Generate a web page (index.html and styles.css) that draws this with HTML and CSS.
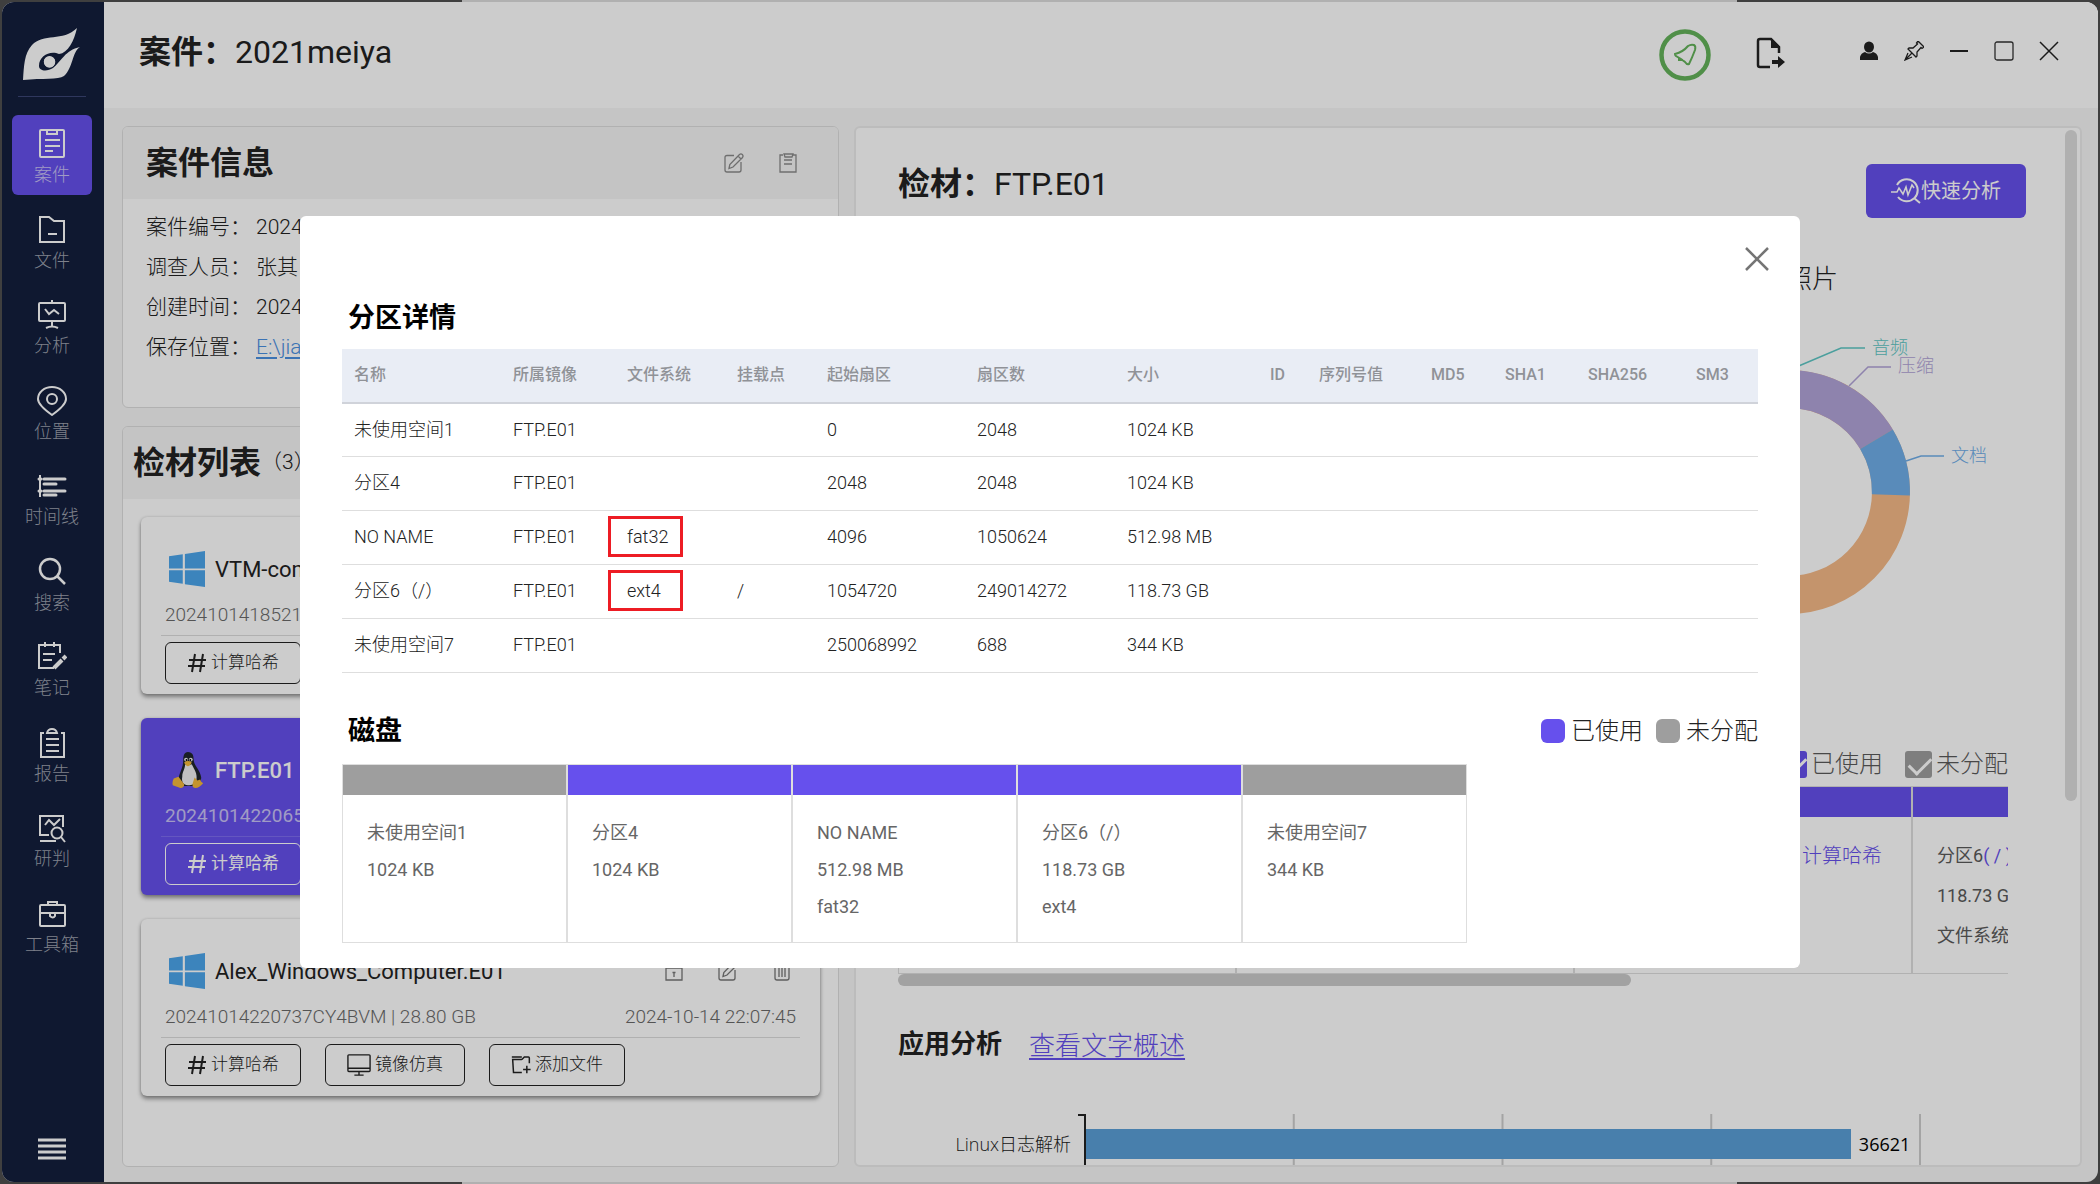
FILE: index.html
```html
<!DOCTYPE html>
<html lang="zh-CN">
<head>
<meta charset="utf-8">
<title>案件：2021meiya</title>
<link rel="stylesheet" href="styles.css">
</head>
<body>
<svg class="sprite" aria-hidden="true">
  <symbol id="i-windows" viewBox="0 0 34 34"><path fill="#4ba5ec" d="M0 5l13-2v13.500H0zM15 2.800L34 0v16.500H15zM0 18.200h13V31L0 29zM15 18.200H34V34l-19-2.700z"/></symbol>
  <symbol id="i-hash" viewBox="0 0 20 20"><path fill="none" stroke="currentColor" stroke-width="2" d="M8 1L5 19M16 1l-3 18M2 7h17M1 13h17"/></symbol>
  <symbol id="i-edit" viewBox="0 0 20 20"><g fill="none" stroke="currentColor" stroke-width="1.300"><path d="M10 2.500H3Q1 2.500 1 4.500V17q0 2 2 2h12q2 0 2-2V9"/><path d="M5 15.500l.800-4L15.500 1.500Q17 .300 18.300 1.500T18.500 4.500L9 14zM14 3l3 3"/></g></symbol>
  <symbol id="i-monitor" viewBox="0 0 26 24"><path fill="none" stroke="currentColor" stroke-width="1.500" d="M2 1h22q1 0 1 1v16q0 1-1 1H2q-1 0-1-1V2q0-1 1-1zM1 15.500h24M13 19v4M8 23h10"/></symbol>
  <symbol id="i-addfile" viewBox="0 0 24 22"><path fill="none" stroke="currentColor" stroke-width="1.800" d="M1 1.500h12M13 4.500H2L3 20h10M13 4.500l3-3h5q1 0 1 1V9M19 12v9M14.500 16.500h9"/></symbol>
  <symbol id="i-lock" viewBox="0 0 20 20"><path fill="none" stroke="currentColor" stroke-width="1.300" d="M2 7h16v12H2zM6 7V4q0-3 4-3t4 3M10 11v5M8.500 11.500h3"/></symbol>
  <symbol id="i-trash" viewBox="0 0 20 20"><path fill="none" stroke="currentColor" stroke-width="1.300" d="M1 4h18M7 4V1h6v3M3 4v13q0 2 2 2h10q2 0 2-2V4M7 7v9M10 7v9M13 7v9"/></symbol>
</svg>

<div class="window">
  <aside class="sidebar">
    <svg class="logo" viewBox="0 0 58 52"><path fill="#fff" fill-rule="evenodd" d="M54 0C51 13 45 25 36 26C28 22 16 27 16 38C16 43 24 44 30 40C38 34 42 22 57 19C49 24 50 40 41 48C35 52 20 50 0 52C1 38 1 26 9 17C20 5 40 14 54 0zM26.500 28A5.500 5.500 0 1 0 26.600 39.500A5.500 5.500 0 0 0 26.500 28z"/><circle cx="26.500" cy="34" r="5.500" fill="#fff"/></svg>
    <hr class="rule">
    <nav class="nav" aria-label="主菜单">
      <a class="item active" href="#"><svg viewBox="0 0 30 30"><g fill="none" stroke="currentColor" stroke-width="2"><rect x="3" y="1" width="24" height="27" rx="1"/><path d="M10 1v4h10V1M8 11h15M8 17h15M8 22h8"/></g></svg>案件</a>
      <a class="item" href="#"><svg viewBox="0 0 30 30"><path fill="none" stroke="currentColor" stroke-width="2" d="M3 2h9l5 4h10v21H3zM11 19h9"/></svg>文件</a>
      <a class="item" href="#"><svg viewBox="0 0 30 30"><path fill="none" stroke="currentColor" stroke-width="2" d="M15 0v3M3 3h24q1 0 1 1v16q0 1-1 1H3q-1 0-1-1V4q0-1 1-1zM8 9l4 5 5-4 5 4M15 21v6M9 28q6-3 12 0"/></svg>分析</a>
      <a class="item" href="#"><svg viewBox="0 0 30 30"><path fill="none" stroke="currentColor" stroke-width="2" d="M15 29Q1 19 1 13a14 12 0 0 1 28 0q0 6-14 16z"/><circle cx="15" cy="13" r="5" fill="none" stroke="currentColor" stroke-width="2"/></svg>位置</a>
      <a class="item" href="#"><svg viewBox="0 0 30 30"><g fill="none" stroke="currentColor"><path stroke-width="2" d="M3 4v22"/><path stroke-width="3" stroke-linecap="round" d="M7 8h21M7 13h12M7 20h21M7 24h12M2 8h2M2 20h2"/></g></svg>时间线</a>
      <a class="item" href="#"><svg viewBox="0 0 30 30"><g fill="none" stroke="currentColor" stroke-width="2.500"><circle cx="13" cy="12" r="10"/><path d="M20 19l8 8"/></g></svg>搜索</a>
      <a class="item" href="#"><svg viewBox="0 0 30 30"><g fill="none" stroke="currentColor" stroke-width="2"><path d="M17 26H2V3h21v8M8 0v5M17 0v5M6 12h12M6 18h9"/><path stroke-width="4" d="M17 26l8-8"/><path stroke-width="4" d="M26 17l3-3"/></g></svg>笔记</a>
      <a class="item" href="#"><svg viewBox="0 0 30 30"><path fill="none" stroke="currentColor" stroke-width="2" d="M7 5H4v24h23V5h-3M10 5q1-4 5-4t5 4zM9 11h13M9 17h13M9 23h13"/></svg>报告</a>
      <a class="item" href="#"><svg viewBox="0 0 30 30"><g fill="none" stroke="currentColor" stroke-width="2"><path d="M26 14V3H3v19h9M8 12l4-5 5 5 6-6M3 28h16"/><circle cx="20" cy="20" r="5.500"/><path d="M24 24l4 5"/></g></svg>研判</a>
      <a class="item" href="#"><svg viewBox="0 0 30 30"><path fill="none" stroke="currentColor" stroke-width="2" d="M4 6h23q1 0 1 1v19q0 1-1 1H4q-1 0-1-1V7q0-1 1-1zM11 6V3h9v3M3 14h25M13 14v3q3 3 5 0v-3"/></svg>工具箱</a>
    </nav>
    <div class="sidebar-foot"><button class="plain" aria-label="展开菜单"><svg width="28" height="22" viewBox="0 0 28 22"><path stroke="#fff" stroke-width="3" d="M0 2h28M0 8h28M0 14h28M0 20h28"/></svg></button></div>
  </aside>

  <div class="main">
    <header class="topbar">
      <h1 class="title">案件：<span class="light">2021meiya</span></h1>
      <div class="tools">
        <button class="plain bell" aria-label="通知"><svg width="52" height="52" viewBox="0 0 52 52"><g fill="none" stroke="#65b35b"><circle cx="26" cy="26" r="23.500" stroke-width="4.500"/><path stroke-width="2" d="M16 25q8-2 13-8 3-2 6-1 2 1 1 5-3 8-6 14-2 1-4-2l-4-3-5-3q-1-1-1-2zM20 29v2h4"/></g></svg></button>
        <button class="plain export" aria-label="导出"><svg width="30" height="32" viewBox="0 0 30 32"><path fill="none" stroke="#222" stroke-width="2.500" d="M14 30H4q-2 0-2-2V4q0-2 2-2h11l8 8v6"/><path fill="#222" d="M15 1l9 9v1h-9zM16 23h6v-4l7 6-7 6v-4h-6z"/></svg></button>
        <button class="plain" aria-label="用户"><svg width="20" height="20" viewBox="0 0 20 20"><ellipse cx="10" cy="6" rx="5" ry="5.500" fill="#222"/><path fill="#222" d="M1 19v-3q1-4 5-5 4 3 8 0 4 1 5 5v3z"/></svg></button>
        <button class="plain" aria-label="置顶"><svg width="20" height="20" viewBox="0 0 20 20"><path fill="none" stroke="#222" stroke-width="1.300" d="M14 0l6 6-2 1.500-1-1-4 4.500v4l-1 1-8-8 1-1h4l4.500-4-1-1zM8 12l-7 7M4 12l-3 7 7-3"/></svg></button>
        <button class="plain" aria-label="最小化"><svg width="20" height="20" viewBox="0 0 20 20"><path stroke="#222" stroke-width="2" d="M1 10h18"/></svg></button>
        <button class="plain" aria-label="最大化"><svg width="20" height="20" viewBox="0 0 20 20"><rect x="1" y="1" width="18" height="18" rx="2" fill="none" stroke="#333" stroke-width="1.300"/></svg></button>
        <button class="plain" aria-label="关闭"><svg width="20" height="20" viewBox="0 0 20 20"><path stroke="#222" stroke-width="1.500" d="M1 1l18 18M19 1L1 19"/></svg></button>
      </div>
    </header>

    <div class="content">
      <div class="left">
        <section class="panel">
          <div class="panel-head">
            <h2 class="title">案件信息</h2>
            <div class="head-icons">
              <button class="plain" aria-label="编辑"><svg class="ic20"><use href="#i-edit"/></svg></button>
              <button class="plain" aria-label="复制"><svg class="ic20" viewBox="0 0 20 20"><path fill="none" stroke="currentColor" stroke-width="1.300" d="M5 2H2v17h16V2h-3M6 1h9l-1 3H7zM6 7h8M6 11h8"/></svg></button>
            </div>
          </div>
          <dl class="facts">
            <dt>案件编号：</dt><dd>2024</dd>
            <dt>调查人员：</dt><dd>张其</dd>
            <dt>创建时间：</dt><dd>2024</dd>
            <dt>保存位置：</dt><dd><a class="path" href="#">E:\jia</a></dd>
          </dl>
        </section>

        <section class="panel grow">
          <div class="panel-head tight"><h2 class="title">检材列表</h2><span class="count">（3）</span></div>
          <div class="cards">
            <article class="card">
              <div class="card-head"><svg class="os"><use href="#i-windows"/></svg><span>VTM-com</span></div>
              <div class="card-sub"><span>2024101418521</span></div>
              <div class="card-actions"><button class="btn"><svg class="ic20"><use href="#i-hash"/></svg>计算哈希</button></div>
            </article>
            <article class="card selected">
              <div class="card-head"><svg class="os" viewBox="0 0 34 38">
                <path fill="#20262c" d="M18 0c5 0 6 4 6 8 0 6 7 11 8 19 0 5-4 9-8 9H13c-5-2-6-7-4-12 2-6 4-9 4-15 0-5 1-9 5-9z"/>
                <path fill="#f1f1f1" d="M15 13q3 2 7 0c3 6 6 10 5 16-1 5-5 6-9 6-5 0-7-4-6-9 0-5 3-8 3-13z"/>
                <circle cx="16" cy="8" r="2" fill="#eee"/><circle cx="21" cy="8" r="2" fill="#eee"/><circle cx="16.500" cy="8.500" r="1"/><circle cx="20.500" cy="8.500" r="1"/>
                <path fill="#f5b93a" d="M14 11q4-3 8 0-2 4-4 4t-4-4zM3 28l5-2 6 8q0 4-4 4l-8-3q-1-3 1-7zM25 27l3 3 3-1q0 2 3 4-4 5-8 5t-3-5z"/></svg><span class="strong">FTP.E01</span></div>
              <div class="card-sub"><span>2024101422065</span></div>
              <div class="card-actions"><button class="btn"><svg class="ic20"><use href="#i-hash"/></svg>计算哈希</button></div>
            </article>
            <article class="card">
              <div class="card-head"><svg class="os"><use href="#i-windows"/></svg><span>Alex_Windows_Computer.E01</span>
                <div class="card-icons">
                  <button class="plain" aria-label="加密"><svg class="ic20"><use href="#i-lock"/></svg></button>
                  <button class="plain" aria-label="编辑"><svg class="ic20"><use href="#i-edit"/></svg></button>
                  <button class="plain" aria-label="删除"><svg class="ic20"><use href="#i-trash"/></svg></button>
                </div>
              </div>
              <div class="card-sub"><span>20241014220737CY4BVM | 28.80 GB</span><time>2024-10-14 22:07:45</time></div>
              <div class="card-actions">
                <button class="btn"><svg class="ic20"><use href="#i-hash"/></svg>计算哈希</button>
                <button class="btn"><svg class="ic24"><use href="#i-monitor"/></svg>镜像仿真</button>
                <button class="btn"><svg class="ic20"><use href="#i-addfile"/></svg>添加文件</button>
              </div>
            </article>
          </div>
        </section>
      </div>

      <section class="panel detail">
        <div class="detail-body">
          <div class="detail-head">
            <h2 class="title">检材：<span class="light">FTP.E01</span></h2>
            <button class="primary"><svg width="30" height="26" viewBox="0 0 30 26"><g fill="none" stroke="#fff" stroke-width="2"><path d="M6 7a11 11 0 1 1 1 12M23 20l6 5"/><path stroke-width="1.600" d="M0 14h6l2-4 4 6 3-7 2 8 4-10 2 3"/></g></svg>快速分析</button>
          </div>
          <div class="detail-rest">
            <div class="chart-tab">照片</div>
            <svg class="donut" width="440" height="320" viewBox="0 0 440 320">
              <g fill="none" stroke-width="38" transform="translate(220 162)">
                <circle r="103" stroke="#f5ba87"/>
                <path stroke="#b2a4d9" d="M0 -103A103 103 0 0 1 88.500 -52.800"/>
                <path stroke="#70aee9" d="M88.500 -52.800A103 103 0 0 1 102.900 2.900"/>
              </g>
              <g fill="none" stroke-width="1.500">
                <path stroke="#5ec7c5" d="M226 38l47-20h24"/><path stroke="#b2a4d9" d="M281 56l19-19h23"/><path stroke="#70aee9" d="M338 131l15-5h23"/>
              </g>
              <g class="donut-label"><text x="304" y="24" fill="#5ec7c5">音频</text><text x="330" y="42" fill="#b2a4d9">压缩</text><text x="383" y="132" fill="#70aee9">文档</text></g>
            </svg>
            <div class="filters">
              <label><input type="checkbox" class="tick used" checked>已使用</label>
              <label><input type="checkbox" class="tick" checked>未分配</label>
            </div>
            <div class="strip">
              <div class="part"></div>
              <div class="part"></div>
              <div class="part"><p><button class="hash">计算哈希</button></p></div>
              <div class="part"><p>分区6<a class="mount" href="#">( / )</a></p><p>118.73 GB</p><p>文件系统</p></div>
            </div>
            <div class="hscroll"></div>
            <div class="apps"><h3 class="subtitle">应用分析</h3><a class="overview" href="#">查看文字概述</a></div>
            <div class="bars">
              <span class="bar-label">Linux日志解析</span>
              <div class="plot"><div class="bar" style="width:91.6%"></div><span class="bar-value">36621</span></div>
            </div>
          </div>
        </div>
        <div class="vtrack"><div class="vthumb"></div></div>
      </section>
    </div>
  </div>

  <div class="overlay">
    <div class="modal" role="dialog" aria-modal="true" aria-labelledby="dlg-title">
      <button class="plain close" aria-label="关闭"><svg width="24" height="24" viewBox="0 0 24 24"><path stroke="#757575" stroke-width="2.500" d="M1 1l22 22M23 1L1 23"/></svg></button>
      <h2 class="section-title" id="dlg-title">分区详情</h2>
      <table class="grid">
        <colgroup><col style="width:159px"><col style="width:114px"><col style="width:110px"><col style="width:90px"><col style="width:150px"><col style="width:150px"><col style="width:143px"><col style="width:49px"><col style="width:112px"><col style="width:74px"><col style="width:83px"><col style="width:108px"><col style="width:74px"></colgroup>
        <thead><tr><th>名称</th><th>所属镜像</th><th>文件系统</th><th>挂载点</th><th>起始扇区</th><th>扇区数</th><th>大小</th><th>ID</th><th>序列号值</th><th>MD5</th><th>SHA1</th><th>SHA256</th><th>SM3</th></tr></thead>
        <tbody>
          <tr><td>未使用空间1</td><td>FTP.E01</td><td></td><td></td><td>0</td><td>2048</td><td>1024 KB</td><td></td><td></td><td></td><td></td><td></td><td></td></tr>
          <tr><td>分区4</td><td>FTP.E01</td><td></td><td></td><td>2048</td><td>2048</td><td>1024 KB</td><td></td><td></td><td></td><td></td><td></td><td></td></tr>
          <tr><td>NO NAME</td><td>FTP.E01</td><td><span class="mark">fat32</span></td><td></td><td>4096</td><td>1050624</td><td>512.98 MB</td><td></td><td></td><td></td><td></td><td></td><td></td></tr>
          <tr><td>分区6（/）</td><td>FTP.E01</td><td><span class="mark">ext4</span></td><td>/</td><td>1054720</td><td>249014272</td><td>118.73 GB</td><td></td><td></td><td></td><td></td><td></td><td></td></tr>
          <tr><td>未使用空间7</td><td>FTP.E01</td><td></td><td></td><td>250068992</td><td>688</td><td>344 KB</td><td></td><td></td><td></td><td></td><td></td><td></td></tr>
        </tbody>
      </table>
      <div class="disk-head">
        <h2 class="section-title">磁盘</h2>
        <ul class="legend"><li><i class="swatch used"></i>已使用</li><li><i class="swatch"></i>未分配</li></ul>
      </div>
      <div class="disk">
        <div class="slot"><p>未使用空间1</p><p>1024 KB</p></div>
        <div class="slot used"><p>分区4</p><p>1024 KB</p></div>
        <div class="slot used"><p>NO NAME</p><p>512.98 MB</p><p>fat32</p></div>
        <div class="slot used"><p>分区6（/）</p><p>118.73 GB</p><p>ext4</p></div>
        <div class="slot"><p>未使用空间7</p><p>344 KB</p></div>
      </div>
    </div>
  </div>
</div>
</body>
</html>
```
FILE: styles.css
```css
:root {
  --accent: #6650ed;
  --navy: #131e3d;
  --line: #dedede;
  --ink: #222;
}
* { box-sizing: border-box; }
body {
  margin: 0;
  padding: 2px;
  height: 100vh;
  background: linear-gradient(90deg, #3f3f3f 22%, #b0b0b0 22%, #b0b0b0 82.7%, #3f3f3f 82.7%);
  color: var(--ink);
  font: 400 18px/1.5 Roboto, "Noto Sans CJK SC", sans-serif;
}
h1, h2, h3, p, dl, dd, ul { margin: 0; padding: 0; }
button, input { font: inherit; color: inherit; }
.sprite { position: absolute; width: 0; height: 0; }
.plain { display: flex; padding: 0; border: 0; background: none; }
.ic20 { width: 20px; height: 20px; }
.ic24 { width: 24px; height: 24px; }

.window {
  position: relative;
  display: flex;
  height: 100%;
  border-radius: 12px;
  overflow: hidden;
  background: #f7f7f7;
}

/* sidebar */
.sidebar {
  flex: 0 0 102px;
  display: flex;
  flex-direction: column;
  align-items: center;
  padding: 26px 2px 0 0;
  background: var(--navy);
}
.logo { width: 58px; height: 52px; }
.rule { width: 68px; margin: 16px 0 18px; border: 0; border-top: 1px solid #3b4575; }
.nav { flex: 1; display: flex; flex-direction: column; justify-content: space-between; }
.item {
  display: flex;
  flex-direction: column;
  align-items: center;
  width: 80px;
  height: 80px;
  padding-top: 14px;
  border-radius: 6px;
  color: #9ea2ae;
  font-weight: 300;
  line-height: 32px;
  text-decoration: none;
}
.item svg { width: 30px; height: 30px; flex: none; color: #fff; }
.active { background: var(--accent); color: #c9c2f6; }
.sidebar-foot { height: 217px; display: flex; align-items: flex-end; padding-bottom: 22px; }

/* top bar */
.main { flex: 1; min-width: 0; display: flex; flex-direction: column; }
.topbar {
  display: flex;
  justify-content: space-between;
  align-items: flex-start;
  height: 106px;
  padding: 26px 39px 0 35px;
  background: #fff;
}
.title { font-size: 32px; line-height: 48px; font-weight: 700; }
.light { font-weight: 400; }
.tools { display: flex; gap: 25px; padding-top: 13px; }
.bell { margin: -12px 20px 0 0; }
.export { margin: -4px 48px 0 0; }

.content {
  flex: 1;
  min-height: 0;
  display: grid;
  grid-template-columns: minmax(0, 717fr) minmax(0, 1228fr);
  grid-template-rows: minmax(0, 1fr);
  gap: 15px;
  padding: 18px 16px 15px 18px;
}
.left { display: flex; flex-direction: column; gap: 18px; min-height: 0; }
.panel { border: 1px solid var(--line); border-radius: 6px; background: #fff; overflow: hidden; }
.grow { flex: 1; }
.panel-head {
  display: flex;
  align-items: center;
  justify-content: space-between;
  height: 72px;
  padding: 0 40px 0 23px;
  background: #f5f5f5;
}
.tight { justify-content: flex-start; padding: 0 10px; }
.count { font-size: 21px; font-weight: 300; }
.head-icons { display: flex; gap: 34px; color: #8a8a8a; }
.facts {
  display: grid;
  grid-template-columns: 110px 1fr;
  padding: 8px 23px 40px;
  font-size: 21px;
  line-height: 40px;
  font-weight: 300;
}
.path { color: #4a90e2; text-underline-offset: 3px; }

/* evidence cards */
.cards { display: flex; flex-direction: column; gap: 24px; padding: 18px; }
.card {
  height: 177px;
  padding: 28px 20px 0;
  border-radius: 6px;
  background: #fff;
  box-shadow: 0 3px 4px rgba(0, 0, 0, .4), 0 0 3px rgba(0, 0, 0, .15);
}
.card-head { display: flex; align-items: center; gap: 10px; height: 48px; padding-left: 8px; font-size: 22px; }
.os { width: 36px; height: 36px; }
.card-icons { display: flex; gap: 34px; margin-left: auto; padding-right: 8px; color: #777; }
.card-sub {
  display: flex;
  justify-content: space-between;
  height: 43px;
  padding: 0 4px;
  border-bottom: 1px solid #dcdcdc;
  color: #6a6a6a;
  font-size: 19px;
  font-weight: 300;
  line-height: 43px;
}
.card-actions { display: flex; gap: 24px; padding: 6px 4px 0; }
.btn {
  display: flex;
  align-items: center;
  gap: 4px;
  height: 42px;
  padding: 0 21px;
  border: 1px solid currentColor;
  border-radius: 6px;
  background: none;
  font-size: 17px;
  font-weight: 300;
}
.selected { background: var(--accent); color: #fff; }
.selected .card-sub { color: #c9c2f6; border-color: #7e6cf0; font-weight: 400; }
.selected .btn { font-weight: 400; }
.strong { font-weight: 500; }

/* evidence detail */
.detail { display: flex; border-width: 2px; border-color: #ebebeb; }
.detail-body { flex: 1; min-width: 0; padding: 36px 36px 0 42px; }
.detail-head { display: flex; justify-content: space-between; align-items: flex-start; }
.detail-head .title { line-height: 40px; }
.primary {
  display: flex;
  align-items: center;
  justify-content: center;
  width: 160px;
  height: 54px;
  border: 0;
  border-radius: 6px;
  background: var(--accent);
  color: #fff;
  font-size: 20px;
}
.vtrack { flex: 0 0 18px; padding: 2px 3px; }
.vthumb { height: 65%; border-radius: 6px; background: #dcdcdc; }
.detail-rest { display: flex; flex-direction: column; padding-right: 18px; }
.chart-tab { align-self: flex-end; margin-top: 43px; padding-right: 170px; font-size: 26px; line-height: 36px; font-weight: 300; }
.donut { align-self: flex-end; margin-top: 33px; }
.donut-label { font-size: 18px; font-weight: 300; }
.filters { display: flex; justify-content: flex-end; gap: 22px; margin-top: 96px; color: #5a5a5a; font-size: 24px; font-weight: 300; line-height: 36px; }
.filters label { display: flex; align-items: center; gap: 4px; }
.tick { appearance: none; width: 27px; height: 27px; margin: 0; border-radius: 3px; background: #9e9e9e; }
.tick.used { background: var(--accent); }
.tick::before {
  content: "";
  display: block;
  width: 19px;
  height: 10px;
  margin: 6px 0 0 4px;
  border: solid #fff;
  border-width: 0 0 3px 3px;
  rotate: -45deg;
}
.strip { display: flex; margin-top: 4px; border: 1px solid var(--line); border-right: 0; height: 188px; overflow: hidden; }
.part { flex: 0 0 338px; padding: 0 24px; border-right: 2px solid var(--line); color: #5a5a5a; line-height: 40px; white-space: nowrap; }
.part::before { content: ""; display: block; height: 30px; margin: 0 -24px 19px; background: var(--accent); }
.hash { display: block; margin-left: auto; padding: 0 5px; border: 0; background: none; color: var(--accent); font-size: 20px; font-weight: 300; line-height: 40px; }
.mount { color: var(--accent); text-decoration: none; }
.hscroll { width: 66%; height: 12px; border-radius: 6px; background: #cbcbcb; }
.apps { display: flex; gap: 27px; margin-top: 38px; font-size: 26px; line-height: 40px; }
.subtitle { font-size: 26px; font-weight: 700; }
.overview { color: var(--accent); font-weight: 300; text-decoration-thickness: 2px; text-underline-offset: 3px; padding-top: 2px; }
.bars { display: flex; margin-top: 48px; padding-right: 87px; font-family: "Open Sans", "Noto Sans CJK SC", sans-serif; }
.bar-label { width: 186px; padding-right: 13px; line-height: 60px; text-align: right; font-weight: 300; }
.plot {
  position: relative;
  flex: 1;
  display: flex;
  align-items: center;
  gap: 8px;
  height: 60px;
  border-left: 2px solid #222;
  background: linear-gradient(90deg, transparent calc(100% - 2px), #cdcdcd 0) 0 0 / 25% 100%;
}
.plot::before { content: ""; position: absolute; top: 0; left: -8px; width: 6px; height: 2px; background: #222; }
.bar { height: 30px; background: #5a9fd7; flex: none; }
.bar-value { color: #000; }

/* partition dialog */
.overlay {
  position: absolute;
  inset: 0;
  display: flex;
  align-items: center;
  justify-content: center;
  background: rgba(0, 0, 0, .2);
}
.modal {
  position: relative;
  width: 1500px;
  max-width: 92%;
  padding: 83px 42px 25px;
  border-radius: 6px;
  background: #fff;
}
.close { position: absolute; top: 31px; right: 31px; }
.section-title { padding-left: 6px; color: #000; font-size: 27px; line-height: 38px; font-weight: 700; }
.grid { width: 100%; margin-top: 12px; border-collapse: collapse; table-layout: fixed; }
.grid th, .grid td { height: 54px; padding: 0 12px; text-align: left; white-space: nowrap; }
.grid th { background: #e9edf5; border-bottom: 2px solid #d0d3da; color: #909297; font-size: 16px; font-weight: 500; }
.grid td { padding-bottom: 2px; border-bottom: 1px solid var(--line); font-weight: 300; }
.mark { position: relative; display: inline-block; width: 40px; }
.mark::after { content: ""; position: absolute; inset: -7px -16px -7px -19px; border: 3px solid #ed1c24; }
.disk-head { display: flex; justify-content: space-between; align-items: center; margin-top: 38px; }
.legend { display: flex; gap: 13px; list-style: none; font-size: 24px; font-weight: 300; line-height: 40px; }
.legend li { display: flex; align-items: center; gap: 6px; }
.swatch { width: 24px; height: 24px; border-radius: 6px; background: #9e9e9e; }
.swatch.used { background: var(--accent); }
.disk { display: flex; margin-top: 13px; }
.slot { flex: 0 0 225px; height: 179px; border: 1px solid var(--line); color: #666; line-height: 37px; padding: 0 24px; }
.slot::before { content: ""; display: block; height: 30px; margin: 0 -24px 19px; background: #9e9e9e; }
.slot.used::before { background: var(--accent); }
```
